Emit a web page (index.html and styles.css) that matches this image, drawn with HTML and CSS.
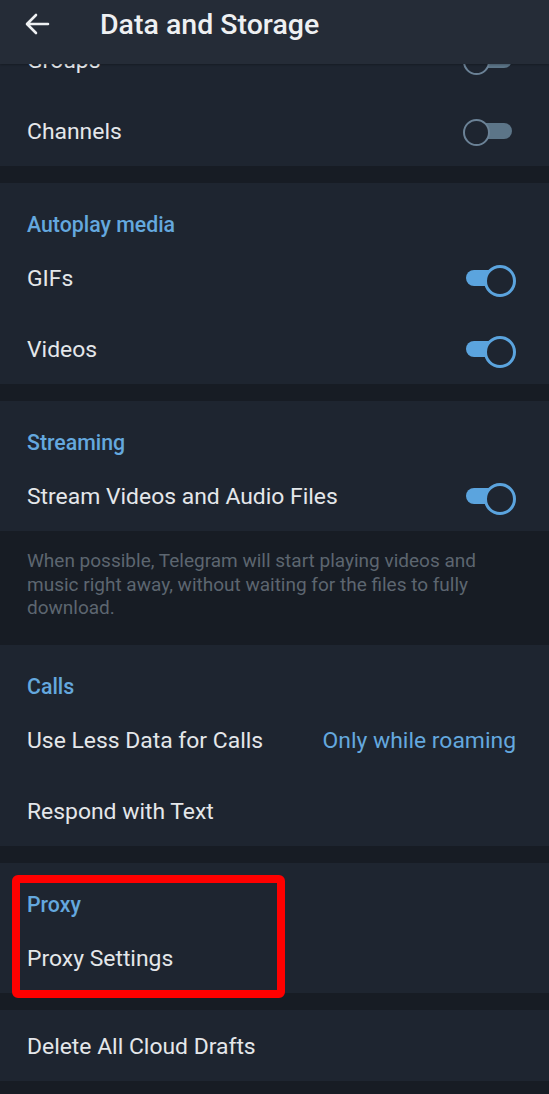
FILE: index.html
```html
<!DOCTYPE html>
<html lang="en">
<head>
<meta charset="utf-8">
<title>Data and Storage</title>
<link rel="stylesheet" href="styles.css">
</head>
<body>
<header class="appbar">
  <svg class="back" width="26" height="24" viewBox="0 0 26 24" aria-hidden="true">
    <path d="M24 12H3.5M12 3L3 12l9 9" fill="none" stroke="#eef0f2" stroke-width="2.6" stroke-linecap="round" stroke-linejoin="round"/>
  </svg>
  <h1 class="title">Data and Storage</h1>
</header>

<main class="list">
  <section class="group">
    <div class="row"><span class="label">Groups</span><span class="toggle off"></span></div>
    <div class="row"><span class="label">Channels</span><span class="toggle off"></span></div>
  </section>

  <section class="group">
    <div class="group-title">Autoplay media</div>
    <div class="row"><span class="label">GIFs</span><span class="toggle on"></span></div>
    <div class="row"><span class="label">Videos</span><span class="toggle on"></span></div>
  </section>

  <section class="group tight">
    <div class="group-title">Streaming</div>
    <div class="row"><span class="label">Stream Videos and Audio Files</span><span class="toggle on"></span></div>
  </section>
  <p class="info">When possible, Telegram will start playing videos and music right away, without waiting for the files to fully download.</p>

  <section class="group">
    <div class="group-title">Calls</div>
    <div class="row"><span class="label">Use Less Data for Calls</span><span class="value">Only while roaming</span></div>
    <div class="row"><span class="label">Respond with Text</span></div>
  </section>

  <section class="group">
    <div class="group-title">Proxy</div>
    <div class="row"><span class="label">Proxy Settings</span></div>
    <div class="highlight"></div>
  </section>

  <section class="group">
    <div class="row"><span class="label">Delete All Cloud Drafts</span></div>
  </section>
</main>
</body>
</html>
```

FILE: styles.css
```css
* { box-sizing: border-box; }

html, body {
  margin: 0;
  padding: 0;
  background: #171c24;
  height: 1094px;
  overflow: hidden;
}

body {
  font-family: Roboto, "Liberation Sans", sans-serif;
  color: #e4e7ea;
  position: relative;
}

.appbar {
  position: absolute;
  top: 0;
  left: 0;
  right: 0;
  height: 64px;
  background: #252c37;
  display: flex;
  align-items: flex-start;
  padding: 12px 0 0 24px;
  z-index: 2;
  box-shadow: 0 1px 2px rgba(0,0,0,0.25);
}

.back {
  display: block;
  flex: none;
}

.title {
  margin: -5px 0 0 50px;
  font-size: 28.5px;
  line-height: 36px;
  font-weight: 500;
  color: #eef0f2;
}

.list {
  padding-top: 24px;
}

.group {
  background: #1e2530;
  margin-bottom: 17px;
  position: relative;
}

.group.tight {
  margin-bottom: 0;
}

.group-title {
  height: 59px;
  padding: 30px 0 0 27px;
  font-size: 21.3px;
  line-height: 24px;
  font-weight: 500;
  color: #64a8de;
}

.row {
  height: 71px;
  display: flex;
  align-items: center;
  justify-content: space-between;
  padding: 2px 33px 0 27px;
}

.label {
  font-size: 22.9px;
  color: #e4e7ea;
}

.value {
  font-size: 22.9px;
  color: #64a8de;
}

.toggle {
  position: relative;
  width: 50px;
  height: 26px;
  flex: none;
  margin-top: -2px;
}

.toggle::before {
  content: "";
  position: absolute;
  top: 5px;
  height: 16px;
  border-radius: 8px;
}

.toggle::after {
  content: "";
  position: absolute;
  top: 0;
  width: 26px;
  height: 26px;
  border-radius: 50%;
  background: #1e2530;
}

.toggle.on::before {
  left: 0;
  right: 10px;
  background: #5ba4de;
}

.toggle.on::after {
  right: 0;
  border: 3px solid #5ba4de;
}

.toggle.off {
  width: 49px;
  margin-right: 4px;
}

.toggle.off::before {
  left: 10px;
  right: 0;
  background: #5c7588;
}

.toggle.off::after {
  left: 0;
  width: 23px;
  height: 23px;
  top: 1px;
  border: 2.5px solid #6b8296;
}

.info {
  margin: 0;
  padding: 18px 30px 24px 27px;
  font-size: 19px;
  line-height: 23.5px;
  color: #5d6670;
  height: 114px;
}

.highlight {
  position: absolute;
  left: 12px;
  top: 12px;
  width: 273px;
  height: 123px;
  border: 8px solid #ff0000;
  border-radius: 6px;
}
```
